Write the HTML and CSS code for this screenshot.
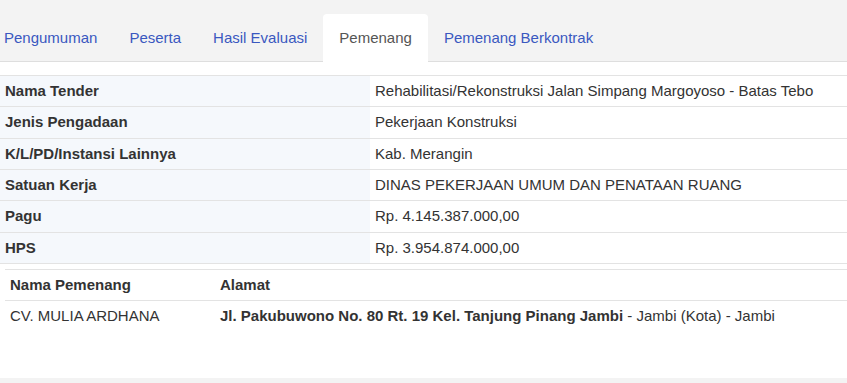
FILE: index.html
```html
<!DOCTYPE html>
<html>
<head>
    <meta charset="UTF-8">
    <meta name="viewport" content="width=device-width, initial-scale=1.0">
    <title>Pemenang</title>
    <link rel="stylesheet" href="styles.css">
</head>
<body>
    <div class="tabBar">
        <ul class="tabs">
            <li><a href="#">Pengumuman</a></li>
            <li><a href="#">Peserta</a></li>
            <li><a href="#">Hasil Evaluasi</a></li>
            <li class="active"><a href="#">Pemenang</a></li>
            <li><a href="#">Pemenang Berkontrak</a></li>
        </ul>
    </div>
    <div class="content">
        <table class="info">
            <tr><th>Nama Tender</th><td>Rehabilitasi/Rekonstruksi Jalan Simpang Margoyoso - Batas Tebo</td></tr>
            <tr><th>Jenis Pengadaan</th><td>Pekerjaan Konstruksi</td></tr>
            <tr><th>K/L/PD/Instansi Lainnya</th><td>Kab. Merangin</td></tr>
            <tr><th>Satuan Kerja</th><td>DINAS PEKERJAAN UMUM DAN PENATAAN RUANG</td></tr>
            <tr><th>Pagu</th><td>Rp. 4.145.387.000,00</td></tr>
            <tr><th>HPS</th><td>Rp. 3.954.874.000,00</td></tr>
            <tr>
                <td colspan="2" class="nested">
                    <table class="winner">
                        <tr><th class="colName">Nama Pemenang</th><th>Alamat</th></tr>
                        <tr><td>CV. MULIA ARDHANA</td><td><b>Jl. Pakubuwono No. 80 Rt. 19 Kel. Tanjung Pinang Jambi</b> - Jambi (Kota) - Jambi</td></tr>
                    </table>
                </td>
            </tr>
        </table>
    </div>
    <div class="footer"></div>
</body>
</html>
```

FILE: styles.css
```css
*{ margin: 0; padding: 0; box-sizing: border-box; }
body{ font-family: "Liberation Sans", Arial, sans-serif; font-size: 15px; color: #333; background: #fff; width: 847px; height: 383px; overflow: hidden; display: flex; flex-direction: column; }
.tabBar{ background: #f3f3f3; padding-top: 14px; border-bottom: 1px solid #dedede; height: 62px; }
.tabs{ list-style: none; display: flex; margin-left: -12px; height: 47px; }
.tabs li a{ display: block; padding: 14px 16px 13px; line-height: 20px; color: #3a58c0; text-decoration: none; }
.tabs li.active a{ background: #fff; color: #555; border-radius: 4px 4px 0 0; height: 48px; }
.content{ padding-top: 13px; flex: 1; }
table{ border-collapse: collapse; width: 100%; }
.info > tbody > tr > th, .info > tbody > tr > td{ border-top: 1px solid #e3e3e3; padding: 5px; line-height: 20.33px; text-align: left; vertical-align: top; }
.info > tbody > tr > th{ width: 370px; background: #f5f8fc; font-weight: bold; }
.info > tbody > tr > td.nested{ padding: 5px 0 0 5px; }
.winner th, .winner td{ padding: 5px; line-height: 20.33px; text-align: left; }
.winner tr:first-child th{ border-top: 1px solid #e3e3e3; border-bottom: 1px solid #e3e3e3; }
.winner .colName{ width: 210px; }
.footer{ height: 5px; background: #f3f3f3; }
```
